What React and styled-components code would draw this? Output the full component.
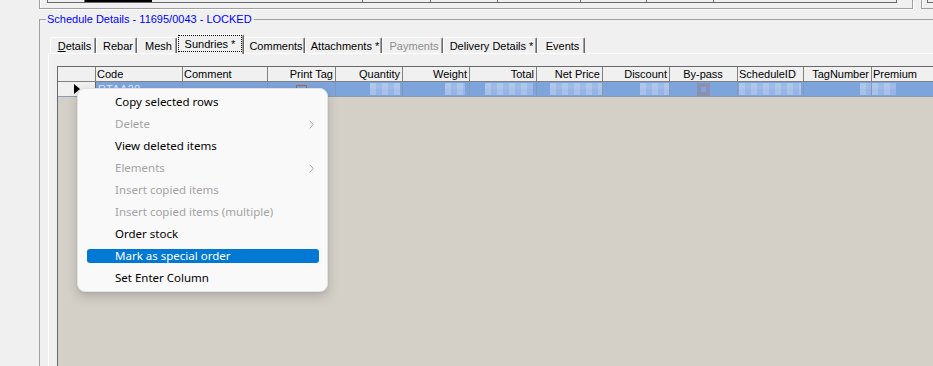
import React from "react";
import styled, { createGlobalStyle } from "styled-components";

const Global = createGlobalStyle`
  html, body { margin: 0; padding: 0; background: #f0f0f0; overflow: hidden; }
  * { box-sizing: border-box; }
`;

const Page = styled.div`
  position: relative;
  width: 933px;
  height: 366px;
  overflow: hidden;
  background: #f0f0f0;
  font-family: "Liberation Sans", Arial, sans-serif;
  font-size: 11px;
  color: #000;
  display: flex;
  flex-direction: column;
`;

/* ---- remains of the panel above ---- */
const TopStrip = styled.div`
  display: flex;
  height: 9px;
  flex: none;
`;
const PrevGroup = styled.div`
  margin-left: 39px;
  width: 874px;
  height: 9px;
  border: 1px solid #a0a0a0;
  border-top: none;
  box-shadow: 1px 1px 0 #fff, inset 1px 0 0 #fff;
  padding-left: 7px;
`;
const PrevGrid = styled.div`
  display: flex;
  width: 850px;
  height: 3px;
  border: 1px solid #696969;
  border-top: none;
`;
const PrevCell = styled.div`
  width: ${(p) => p.$w}px;
  flex: none;
  height: 2px;
  background: ${(p) => (p.$dark ? "#000" : "transparent")};
  border-right: 1px solid ${(p) => (p.$dark ? "#000" : "#696969")};
  &:last-child { border-right: none; flex: 1; }
`;
const RightGroup = styled.div`
  margin-left: 8px;
  flex: 1;
  height: 9px;
  border-left: 1px solid #a0a0a0;
  border-bottom: 1px solid #a0a0a0;
  box-shadow: inset 1px 0 0 #fff;
  padding-left: 5px;
`;
const RightInner = styled.div`
  height: 3px;
  border-left: 1px solid #696969;
  border-bottom: 1px solid #696969;
`;

/* ---- group box ---- */
const GroupBox = styled.fieldset`
  margin: 3px 0 0 39px;
  padding: 0 0 0 8px;
  min-width: 0;
  flex: 1;
  border: none;
  border-top: 1px solid #a0a0a0;
  border-left: 1px solid #a0a0a0;
  display: flex;
  flex-direction: column;
`;
const Legend = styled.legend`
  margin-left: -2px;
  padding: 0 2px 0 1px;
  color: #0000ff;
  font-size: 11px;
  line-height: 14px;
`;

/* ---- tabs ---- */
const TabStrip = styled.div`
  display: flex;
  align-items: flex-end;
  height: 19px;
  margin-top: 8px;
  padding-left: 2px;
`;
const Tab = styled.div`
  position: relative;
  width: ${(p) => p.$w}px;
  height: ${(p) => (p.$active ? 20 : 16)}px;
  margin-bottom: ${(p) => (p.$active ? -1 : 0)}px;
  z-index: ${(p) => (p.$active ? 1 : 0)};
  flex: none;
  background: #f0f0f0;
  border-top: 1px solid #fff;
  border-left: 1px solid #fff;
  border-right: 1px solid #696969;
  box-shadow: inset -1px 0 0 #a0a0a0;
  border-radius: 2px 2px 0 0;
  color: ${(p) => (p.$disabled ? "#8d8d8d" : "#000")};
  display: flex;
  padding: ${(p) => (p.$active ? "0 1px 2px 0" : "0 0 0 3px")};
  justify-content: center;
  align-items: center;
  line-height: 14px;
  white-space: nowrap;
`;
const FocusLabel = styled.span`
  flex: 1;
  align-self: stretch;
  display: flex;
  align-items: center;
  justify-content: center;
  border: 1px dotted #000;
`;

const TabPanel = styled.div`
  flex: 1;
  border-top: 1px solid #fff;
  border-left: 1px solid #fff;
  padding: 12px 0 0 8px;
  display: flex;
  flex-direction: column;
`;

/* ---- grid ---- */
const Grid = styled.div`
  flex: 1;
  background: #d4d0c8;
  border-top: 1px solid #696969;
  border-left: 1px solid #696969;
  display: flex;
  flex-direction: column;
  overflow: hidden;
`;
const Row = styled.div`
  display: flex;
  height: 15px;
  flex: none;
  border-bottom: 1px solid ${(p) => (p.$header ? "#808080" : "#8a9cb8")};
`;
const HeadCell = styled.div`
  width: ${(p) => p.$w}px;
  flex: none;
  background: #f0f0f0;
  border-right: 1px solid #808080;
  padding: 0 2px 0 1px;
  display: flex;
  align-items: center;
  justify-content: ${(p) => p.$justify};
  white-space: nowrap;
  overflow: hidden;
  line-height: 14px;
`;
const RowHeader = styled.div`
  width: 38px;
  flex: none;
  background: #f0f0f0;
  border-right: 1px solid #696969;
  display: flex;
  align-items: center;
  justify-content: flex-end;
  padding-right: 15px;
`;
const Arrow = styled.span`
  width: 0;
  height: 0;
  border-top: 5px solid transparent;
  border-bottom: 5px solid transparent;
  border-left: 6px solid #000;
`;
const DataCell = styled.div`
  width: ${(p) => p.$w}px;
  flex: none;
  background: #7ea4dc;
  border-right: 1px solid #8898b4;
  display: flex;
  align-items: center;
  justify-content: ${(p) => p.$justify};
  padding: 0 ${(p) => p.$pr || 0}px 0 ${(p) => p.$pl || 0}px;
  overflow: hidden;
  white-space: nowrap;
`;
const Blob = styled.span`
  width: ${(p) => p.$w}px;
  height: 12px;
  background-color: #9cb8e6;
  background-image: linear-gradient(90deg, rgba(255, 255, 255, 0.12) 50%, rgba(120, 155, 215, 0.12) 50%),
    linear-gradient(rgba(255, 255, 255, 0.08) 50%, transparent 50%);
  background-size: 12px 12px, 6px 12px;
`;
const BypassMark = styled.span`
  width: 13px;
  height: 13px;
  background: #8c8fb4;
  display: flex;
  align-items: center;
  justify-content: center;
  &::after { content: ""; width: 5px; height: 5px; background: #7ea4dc; }
`;
const CodeText = styled.span`
  color: #dfe8f7;
  padding-left: 2px;
  letter-spacing: 0.3px;
`;
const Check = styled.span`
  width: 11px;
  height: 11px;
  border: 1px solid #b0653a;
  background: #7ea4dc;
  margin-top: 2px;
`;

/* ---- context menu ---- */
const Menu = styled.div`
  position: absolute;
  left: 77px;
  top: 88px;
  width: 251px;
  height: 204px;
  background: #f9f9f9;
  border: 1px solid #e2e2e2;
  border-radius: 8px;
  box-shadow: 0 5px 12px rgba(0, 0, 0, 0.16), 0 1px 3px rgba(0, 0, 0, 0.08);
  padding: 2px 0;
  font-family: "Noto Sans", "Open Sans", sans-serif;
  font-size: 11.5px;
  z-index: 5;
`;
const MenuItem = styled.div`
  height: 22px;
  display: flex;
  align-items: center;
  padding: 0 8px 0 9px;
`;
const ItemBar = styled.div`
  flex: 1;
  height: 14px;
  border-radius: 3px;
  display: flex;
  align-items: center;
  padding: 0 5px 0 28px;
  background: ${(p) => (p.$active ? "#0078d4" : "transparent")};
  color: ${(p) => (p.$active ? "#fff" : p.$disabled ? "#a3a3a3" : "#000")};
  white-space: nowrap;
  line-height: 14px;
`;
const Chevron = styled.svg`
  margin-left: auto;
  flex: none;
`;

const prevCells = [
  { w: 37 }, { w: 67, dark: true }, { w: 211 }, { w: 68 }, { w: 67 }, { w: 83 },
  { w: 66 }, { w: 67 }, { w: 183 },
];

const tabs = [
  { label: "Details", w: 46, mn: true },
  { label: "Rebar", w: 41 },
  { label: "Mesh", w: 40 },
  { label: "Sundries *", w: 67, active: true },
  { label: "Comments", w: 61 },
  { label: "Attachments *", w: 77 },
  { label: "Payments", w: 61, disabled: true },
  { label: "Delivery Details *", w: 94 },
  { label: "Events", w: 48 },
];

const columns = [
  { name: "Code", w: 87, j: "flex-start" },
  { name: "Comment", w: 85, j: "flex-start" },
  { name: "Print Tag", w: 68, j: "flex-end" },
  { name: "Quantity", w: 67, j: "flex-end" },
  { name: "Weight", w: 67, j: "flex-end" },
  { name: "Total", w: 67, j: "flex-end" },
  { name: "Net Price", w: 66, j: "flex-end" },
  { name: "Discount", w: 67, j: "flex-end" },
  { name: "By-pass", w: 68, j: "center" },
  { name: "ScheduleID", w: 66, j: "flex-start" },
  { name: "TagNumber", w: 68, j: "flex-end" },
  { name: "Premium", w: 90, j: "flex-start" },
];

const cells = [
  { kind: "code" },
  { kind: "empty" },
  { kind: "check" },
  { kind: "blob", bw: 30, pr: 2 },
  { kind: "blob", bw: 20, pr: 4 },
  { kind: "blob", bw: 48, pr: 3 },
  { kind: "blob", bw: 52, pr: 0 },
  { kind: "blob", bw: 29, pr: 0 },
  { kind: "bypass" },
  { kind: "blob", bw: 62, pl: 1 },
  { kind: "blob", bw: 11, pr: 0 },
  { kind: "blob", bw: 24, pl: 0 },
];

const menuItems = [
  { label: "Copy selected rows" },
  { label: "Delete", disabled: true, sub: true },
  { label: "View deleted items" },
  { label: "Elements", disabled: true, sub: true },
  { label: "Insert copied items", disabled: true },
  { label: "Insert copied items (multiple)", disabled: true },
  { label: "Order stock" },
  { label: "Mark as special order", active: true },
  { label: "Set Enter Column" },
];

function CellContent({ cell }) {
  if (cell.kind === "code") return <CodeText>RTAA20</CodeText>;
  if (cell.kind === "check") return <Check />;
  if (cell.kind === "bypass") return <BypassMark />;
  if (cell.kind === "blob") return <Blob $w={cell.bw} />;
  return null;
}

export default function App() {
  return (
    <Page>
      <Global />
      <TopStrip>
        <PrevGroup>
          <PrevGrid>
            {prevCells.map((c, i) => (
              <PrevCell key={i} $w={c.w} $dark={c.dark} />
            ))}
          </PrevGrid>
        </PrevGroup>
        <RightGroup>
          <RightInner />
        </RightGroup>
      </TopStrip>

      <GroupBox>
        <Legend>Schedule Details - 11695/0043 - LOCKED</Legend>
        <TabStrip>
          {tabs.map((t) => (
            <Tab key={t.label} $w={t.w} $active={t.active} $disabled={t.disabled}>
              {t.active ? (
                <FocusLabel>{t.label}</FocusLabel>
              ) : t.mn ? (
                <span>
                  <u>D</u>etails
                </span>
              ) : (
                t.label
              )}
            </Tab>
          ))}
        </TabStrip>
        <TabPanel>
          <Grid>
            <Row $header>
              <HeadCell $w={38} $justify="flex-start" />
              {columns.map((c) => (
                <HeadCell key={c.name} $w={c.w} $justify={c.j}>
                  {c.name}
                </HeadCell>
              ))}
            </Row>
            <Row>
              <RowHeader>
                <Arrow />
              </RowHeader>
              {columns.map((c, i) => (
                <DataCell
                  key={c.name}
                  $w={c.w}
                  $justify={cells[i].kind === "code" || cells[i].pl !== undefined ? "flex-start" : cells[i].kind === "blob" ? "flex-end" : "center"}
                  $pr={cells[i].pr}
                  $pl={cells[i].pl}
                >
                  <CellContent cell={cells[i]} />
                </DataCell>
              ))}
            </Row>
          </Grid>
        </TabPanel>
      </GroupBox>

      <Menu>
        {menuItems.map((m) => (
          <MenuItem key={m.label}>
            <ItemBar $active={m.active} $disabled={m.disabled}>
              {m.label}
              {m.sub && (
                <Chevron width="5" height="9" viewBox="0 0 5 9">
                  <path d="M0.7 0.7 L4.2 4.5 L0.7 8.3" fill="none" stroke="#a3a3a3" strokeWidth="1" />
                </Chevron>
              )}
            </ItemBar>
          </MenuItem>
        ))}
      </Menu>
    </Page>
  );
}
